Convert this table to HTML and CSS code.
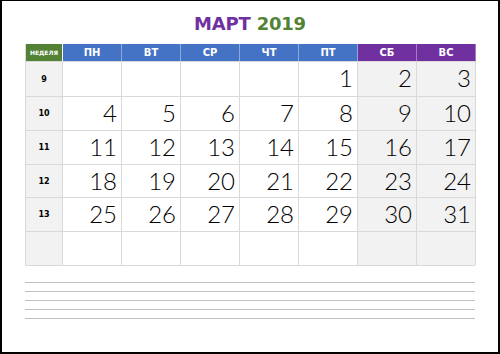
FILE: index.html
```html
<!DOCTYPE html>
<html lang="ru">
<head>
<meta charset="utf-8">
<link rel="stylesheet" href="styles.css">
</head>
<body>
<div class="page">
  <h1 class="title"><span class="month">МАРТ</span> <span class="year">2019</span></h1>
  <div class="cal">
    <div class="hd week-hd">НЕДЕЛЯ</div>
    <div class="hd">ПН</div>
    <div class="hd">ВТ</div>
    <div class="hd">СР</div>
    <div class="hd">ЧТ</div>
    <div class="hd">ПТ</div>
    <div class="hd we">СБ</div>
    <div class="hd we">ВС</div>

    <div class="wk">9</div>
    <div class="d"></div><div class="d"></div><div class="d"></div><div class="d"></div>
    <div class="d">1</div><div class="d w">2</div><div class="d w">3</div>

    <div class="wk">10</div>
    <div class="d">4</div><div class="d">5</div><div class="d">6</div><div class="d">7</div>
    <div class="d">8</div><div class="d w">9</div><div class="d w">10</div>

    <div class="wk">11</div>
    <div class="d">11</div><div class="d">12</div><div class="d">13</div><div class="d">14</div>
    <div class="d">15</div><div class="d w">16</div><div class="d w">17</div>

    <div class="wk">12</div>
    <div class="d">18</div><div class="d">19</div><div class="d">20</div><div class="d">21</div>
    <div class="d">22</div><div class="d w">23</div><div class="d w">24</div>

    <div class="wk">13</div>
    <div class="d">25</div><div class="d">26</div><div class="d">27</div><div class="d">28</div>
    <div class="d">29</div><div class="d w">30</div><div class="d w">31</div>

    <div class="wk"></div>
    <div class="d"></div><div class="d"></div><div class="d"></div><div class="d"></div>
    <div class="d"></div><div class="d w"></div><div class="d w"></div>
  </div>
  <div class="notes">
    <div class="line"></div>
    <div class="line"></div>
    <div class="line"></div>
    <div class="line"></div>
    <div class="line"></div>
  </div>
</div>
</body>
</html>
```

FILE: styles.css
```css
* { box-sizing: border-box; }
html, body { margin: 0; padding: 0; background: #fff; }
.page {
  width: 500px;
  height: 354px;
  border: 2px solid #000;
  border-top-width: 1px;
  padding: 12px 23px 0 23px;
  font-family: "DejaVu Sans", sans-serif;
}
.title {
  margin: 0;
  height: 31px;
  text-align: center;
  font-family: "DejaVu Sans", sans-serif;
  font-weight: bold;
  font-size: 18px;
  line-height: 22px;
  letter-spacing: -0.2px;
}
.month { color: #7030a0; }
.year { color: #548235; }
.cal {
  display: grid;
  grid-template-columns: 37px repeat(7, 59px);
  grid-template-rows: 17px 35px 34px 34px 33px 34px 34px;
  border-left: 1px solid #d9d9d9;
  border-bottom: 1px solid #d9d9d9;
}
.hd {
  background: #4472c4;
  color: #fff;
  font-weight: bold;
  font-size: 10px;
  display: flex;
  align-items: center;
  justify-content: center;
  border-right: 1px solid #8eaadb;
}
.hd.we { background: #7030a0; border-right-color: #a37cc4; }
.hd.we:last-child { border-right: none; }
.week-hd {
  background: #548235;
  font-size: 6px;
  border-right-color: #fff;
}
.wk {
  background: #f2f2f2;
  border-right: 1px solid #d9d9d9;
  border-top: 1px solid #d9d9d9;
  display: flex;
  align-items: center;
  justify-content: center;
  font-weight: bold;
  font-size: 8px;
  color: #000;
}
.d {
  border-right: 1px solid #d9d9d9;
  border-top: 1px solid #d9d9d9;
  text-align: right;
  padding: 3px 4px 0 0;
  font-family: "Lato", "DejaVu Sans", sans-serif;
  font-weight: 300;
  font-size: 24px;
  line-height: 26px;
  color: #000;
}
.d.w { background: #f2f2f2; }
.notes {
  margin-top: 16px;
  display: flex;
  flex-direction: column;
  gap: 8px;
}
.line {
  height: 1px;
  background: #bfbfbf;
}
```
